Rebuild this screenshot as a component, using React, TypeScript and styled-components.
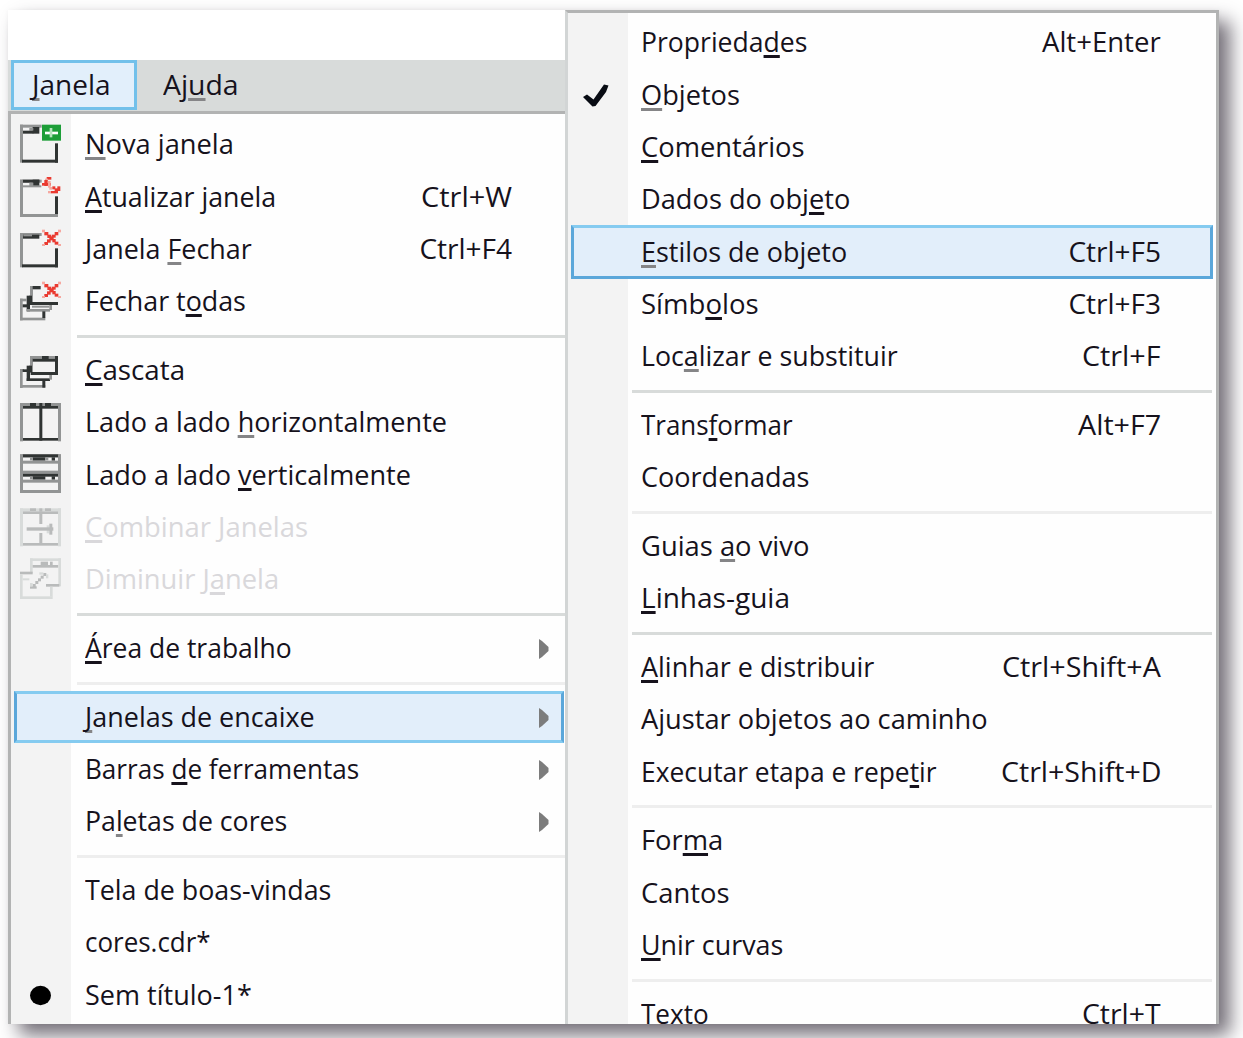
import React, { ReactNode, useLayoutEffect, useRef, useState } from 'react';
import styled, { createGlobalStyle } from 'styled-components';

const GlobalStyle = createGlobalStyle`
  body { margin: 0; background: #fff; overflow: hidden; }
  * { box-sizing: border-box; }
`;

const Page = styled.div`
  width: 1243px;
  height: 1038px;
  padding: 10px 0 0 8px;
  overflow: hidden;
  font-family: 'Open Sans', 'Noto Sans', sans-serif;
  font-size: 28px;
  font-weight: 500;
  color: #16121c;
`;

const Sheet = styled.div`
  display: flex;
  width: 1211px;
  height: 1014px;
  background: #fff;
  box-shadow: 11px 11px 18px rgba(62, 56, 68, 0.72), 0 0 5px rgba(0, 0, 0, 0.04);
`;

const LeftColumn = styled.div`
  display: flex;
  flex-direction: column;
  width: 557px;
  padding-top: 50px;
`;

const MenuBar = styled.div`
  display: flex;
  height: 54px;
  padding-left: 3px;
  background: #d8dbda;
  border-bottom: 3px solid #b2b3b3;
`;

const Tab = styled.div<{ $active?: boolean }>`
  display: flex;
  align-items: center;
  width: 126px;
  height: 50px;
  padding: 0 0 3px ${p => (p.$active ? 18 : 26)}px;
  border: ${p => (p.$active ? '3px solid #72c0ea' : '0')};
  background: ${p => (p.$active ? '#e2effb' : 'transparent')};
`;

const Panel = styled.div<{ $side: 'left' | 'right' }>`
  flex: 1;
  min-height: 0;
  overflow: hidden;
  background: linear-gradient(to right, #f3f3f3 60px, #fefefe 60px);
  ${p =>
    p.$side === 'left'
      ? 'padding-top: 5px; border-left: 3px solid #b2b3b3;'
      : 'padding-top: 4px; border: 3px solid #b2b3b3; border-left-color: #d2d5d5; border-bottom: 0;'}
`;

const Row = styled.div<{ $disabled?: boolean }>`
  position: relative;
  display: grid;
  grid-template-columns: 60px 1fr auto;
  align-items: center;
  height: 52.35px;
  color: ${p => (p.$disabled ? '#d9d8db' : 'inherit')};
`;

const Highlight = styled.div<{ $side: 'left' | 'right' }>`
  position: absolute;
  inset: ${p => (p.$side === 'left' ? '0 1px 1px 3px' : '-1px 3px 0 3px')};
  background: #e2eefa;
  border: 3px solid #5ba7da;
  border-top-color: #85cbf0;
  border-bottom-color: ${p => (p.$side === 'left' ? '#85cbf0' : '#5ba7da')};
`;

const Gutter = styled.div`
  position: relative;
  display: flex;
  justify-content: center;
  align-items: center;
  svg { overflow: visible; }
`;

const Label = styled.div<{ $side: 'left' | 'right' }>`
  position: relative;
  padding: 0 0 4px ${p => (p.$side === 'left' ? 14 : 13)}px;
  white-space: nowrap;
`;

const Shortcut = styled.div<{ $side: 'left' | 'right' }>`
  position: relative;
  display: flex;
  justify-content: flex-end;
  padding: 0 ${p => (p.$side === 'left' ? 53 : 55)}px 4px 0;
  white-space: nowrap;
`;

const Submenu = styled.div`
  position: relative;
  display: flex;
  padding-right: 16px;
`;

const Separator = styled.div<{ $dark?: boolean; $side: 'left' | 'right' }>`
  display: flex;
  align-items: center;
  height: 16.3px;
  padding: 0 ${p => (p.$side === 'left' ? 0 : 4)}px 0 ${p => (p.$side === 'left' ? 66 : 64)}px;
  &::after {
    content: '';
    flex: 1;
    height: 3px;
    background: ${p => (p.$dark ? '#d8dbda' : '#eeeeee')};
  }
`;

const Condensed = styled.span<{ $end?: boolean }>`
  display: inline-block;
  white-space: pre;
  transform-origin: ${p => (p.$end ? 'right' : 'left')} center;
`;

const Key = styled.span<{ $soft?: boolean }>`
  text-decoration: underline ${p => (p.$soft ? '#858587' : 'currentColor')} 3px;
  text-underline-offset: 3px;
  text-decoration-skip-ink: none;
`;

/* Sets a line of text to a given advance width. "_x" marks an access key, "~x" one with a grey line. */
function Fit({ text, width, end }: { text: string; width: number; end?: boolean }) {
  const ref = useRef<HTMLSpanElement>(null);
  const [scale, setScale] = useState(1);
  useLayoutEffect(() => {
    if (ref.current) setScale((width - 1) / ref.current.offsetWidth);
  }, [width, text]);
  const parts: ReactNode[] = [];
  let plain = '';
  for (let i = 0; i < text.length; i++) {
    if (text[i] === '_' || text[i] === '~') {
      parts.push(plain);
      plain = '';
      parts.push(<Key key={i} $soft={text[i] === '~'}>{text[i + 1]}</Key>);
      i++;
    } else plain += text[i];
  }
  parts.push(plain);
  return <Condensed ref={ref} $end={end} style={{ transform: `scaleX(${scale})` }}>{parts}</Condensed>;
}

const D = '#303433';
const G = '#929494';
const R = '#ea3a30';
const P = '#f5a8a0';
const L = '#d8dbda';
const M = '#b9bbbb';

type Block = [string, number, number, number, number];

const redX: Block[] = [
  [R, 73, 9, 12, 10], [R, 82, 17, 12, 10], [R, 88, 22, 13, 12], [R, 97, 30, 10, 10], [R, 104, 38, 11, 9],
  [R, 104, 9, 11, 10], [R, 96, 17, 11, 9], [R, 81, 31, 11, 10], [R, 73, 39, 11, 9],
  [P, 66, 2, 9, 8], [P, 114, 2, 9, 8], [P, 66, 45, 9, 6], [P, 114, 45, 9, 6],
];

const frame = (t: number, b: number, low: string, header: Block[]): Block[] => [
  [G, 0, t, 65, 9], ...header, [G, 0, t, 9, b - t],
  [D, 105, 58, 9, b - 58], [low, 6, b - 9, 108, 9],
];

const ICONS: Record<string, Block[]> = {
  create: [
    ...frame(2, 116, D, [[D, 38, 9, 20, 20], [G, 28, 12, 12, 8], [D, 8, 20, 32, 9]]),
    ['#1d9e38', 66, 2, 57, 48], ['#fff', 75, 23, 39, 8], ['#b5e3bd', 89, 12, 8, 28],
  ],
  refresh: [
    ...frame(8, 120, G, [[D, 8, 8, 50, 9], [D, 38, 8, 20, 20], [G, 28, 17, 12, 10], [G, 8, 25, 56, 6]]),
    [R, 80, 0, 14, 8], [P, 75, 5, 9, 8], [R, 73, 9, 10, 18], [R, 66, 18, 27, 8], [P, 84, 12, 8, 20],
    [P, 88, 30, 8, 8], [R, 97, 28, 9, 9], [R, 104, 34, 10, 12], [R, 112, 28, 9, 14], [R, 92, 42, 22, 7], [P, 84, 42, 8, 7],
  ],
  close: [...frame(12, 115, D, [[D, 8, 17, 50, 12], [G, 10, 16, 26, 6]]), ...redX],
  closeAll: [
    [G, 30, 15, 14, 9], [D, 38, 15, 24, 10], [G, 30, 24, 9, 42], [D, 35, 63, 79, 9],
    [D, 20, 44, 10, 47], [D, 28, 44, 8, 28], [G, 20, 84, 70, 8], [G, 88, 72, 8, 15], [G, 36, 74, 52, 6],
    [G, 0, 53, 20, 8], [G, 0, 53, 8, 65], [D, 8, 70, 20, 9], [G, 0, 110, 76, 8], [D, 67, 91, 9, 20],
    ...redX,
  ],
  cascade: [
    [G, 30, 18, 84, 8], [D, 66, 18, 20, 9], [D, 105, 18, 9, 57], [G, 30, 18, 9, 50], [D, 38, 26, 76, 9], [D, 32, 66, 82, 9],
    [D, 20, 47, 10, 46], [D, 28, 47, 8, 20], [D, 20, 85, 70, 8], [G, 88, 75, 8, 14],
    [G, 0, 57, 12, 8], [G, 0, 57, 8, 57], [D, 8, 58, 28, 8], [G, 0, 105, 76, 8], [D, 67, 93, 9, 20],
  ],
  columns: [
    [G, 0, 3, 123, 9], [D, 30, 3, 18, 9], [D, 58, 3, 9, 9], [D, 75, 3, 18, 9], [D, 8, 12, 107, 8],
    [G, 0, 3, 9, 115], [G, 114, 3, 9, 115], [D, 9, 108, 105, 8], [D, 58, 12, 9, 104],
  ],
  rows: [
    [G, 0, -2, 123, 9], [D, 8, -2, 107, 9], [D, 38, 7, 38, 10], [G, 30, 7, 8, 9], [G, 76, 7, 9, 9], [D, 95, 7, 10, 10],
    [G, 0, 17, 123, 9], [G, 0, 47, 123, 9], [D, 8, 56, 107, 9], [D, 38, 64, 38, 10], [G, 30, 64, 8, 9], [D, 95, 64, 10, 10],
    [G, 0, 74, 123, 9], [G, 0, 105, 123, 9], [G, 0, -2, 9, 115], [G, 114, -2, 9, 115],
  ],
  combine: [
    [L, 0, 4, 123, 9], [M, 30, 4, 18, 8], [M, 58, 4, 9, 8], [M, 75, 4, 18, 8], [M, 8, 13, 107, 8],
    [L, 0, 4, 9, 114], [L, 114, 4, 9, 114], [M, 9, 108, 105, 8], [M, 58, 13, 9, 38], [M, 58, 78, 9, 30],
    [L, 80, 55, 8, 24], [M, 20, 61, 80, 10], [M, 88, 50, 9, 33],
  ],
  shrink: [
    [L, 30, -2, 93, 8], [L, 30, -2, 8, 44], [M, 62, 8, 22, 10], [M, 90, 8, 8, 10], [M, 38, 18, 77, 8],
    [L, 115, -2, 8, 84], [M, 78, 75, 40, 8],
    [M, 0, 38, 38, 8], [L, 8, 58, 20, 6], [L, 0, 46, 8, 74], [L, 0, 112, 98, 8], [L, 90, 83, 8, 30],
    [M, 38, 75, 9, 10], [M, 46, 66, 9, 9], [M, 54, 58, 9, 9], [M, 62, 50, 9, 9], [M, 70, 42, 9, 9],
    [M, 30, 82, 20, 7], [L, 58, 40, 12, 7], [L, 78, 46, 7, 12], [L, 30, 72, 8, 10],
  ],
};

function Icon({ name }: { name: string }) {
  if (name === 'check') {
    return (
      <svg width="42" height="42" viewBox="0 0 42 42">
        <path d="M6 22 L10 19.5 L16.5 24.5 L27 9.5 L31.5 10.5 L29 17 L18.5 31 L15.5 31.5 Z" fill="#080b13" />
      </svg>
    );
  }
  if (name === 'bullet') {
    return (
      <svg width="42" height="42" viewBox="0 0 42 42">
        <ellipse cx="20.5" cy="20.5" rx="10.5" ry="9.7" fill="#000" />
      </svg>
    );
  }
  return (
    <svg width="42" height="42" viewBox="0 0 126 126">
      {ICONS[name].map(([fill, x, y, w, h], i) => (
        <rect key={i} x={x} y={y} width={w} height={h} fill={fill} />
      ))}
    </svg>
  );
}

type Item =
  | { sep: 'dark' | 'light' }
  | { t: string; w: number; k?: string; kw?: number; icon?: string; off?: boolean; on?: boolean; more?: boolean };

const leftItems: Item[] = [
  { t: '~Nova janela', w: 150, icon: 'create' },
  { t: '_Atualizar janela', w: 192, k: 'Ctrl+W', kw: 92, icon: 'refresh' },
  { t: 'Janela ~Fechar', w: 168, k: 'Ctrl+F4', kw: 94, icon: 'close' },
  { t: 'Fechar t_odas', w: 162, icon: 'closeAll' },
  { sep: 'dark' },
  { t: '_Cascata', w: 101, icon: 'cascade' },
  { t: 'Lado a lado ~horizontalmente', w: 363, icon: 'columns' },
  { t: 'Lado a lado _verticalmente', w: 327, icon: 'rows' },
  { t: '_Combinar Janelas', w: 224, icon: 'combine', off: true },
  { t: 'Diminuir J_anela', w: 195, icon: 'shrink', off: true },
  { sep: 'dark' },
  { t: '_Área de trabalho', w: 208, more: true },
  { sep: 'light' },
  { t: '~Janelas de encaixe', w: 231, more: true, on: true },
  { t: 'Barras _de ferramentas', w: 275, more: true },
  { t: 'Pa~letas de cores', w: 203, more: true },
  { sep: 'light' },
  { t: 'Tela de boas-vindas', w: 247 },
  { t: 'cores.cdr*', w: 127 },
  { t: 'Sem título-1*', w: 168, icon: 'bullet' },
];

const rightItems: Item[] = [
  { t: 'Proprieda_des', w: 167, k: 'Alt+Enter', kw: 120 },
  { t: '~Objetos', w: 100, icon: 'check' },
  { t: '_Comentários', w: 165 },
  { t: 'Dados do obj_eto', w: 210 },
  { t: '~Estilos de objeto', w: 207, k: 'Ctrl+F5', kw: 94, on: true },
  { t: 'Símb_olos', w: 119, k: 'Ctrl+F3', kw: 94 },
  { t: 'Loc~alizar e substituir', w: 258, k: 'Ctrl+F', kw: 80 },
  { sep: 'dark' },
  { t: 'Trans_formar', w: 153, k: 'Alt+F7', kw: 84 },
  { t: 'Coordenadas', w: 169 },
  { sep: 'light' },
  { t: 'Guias ~ao vivo', w: 169 },
  { t: '_Linhas-guia', w: 150 },
  { sep: 'dark' },
  { t: '_Alinhar e distribuir', w: 234, k: 'Ctrl+Shift+A', kw: 160 },
  { t: 'Ajustar objetos ao caminho', w: 348 },
  { t: 'Executar etapa e repe_tir', w: 297, k: 'Ctrl+Shift+D', kw: 161 },
  { sep: 'light' },
  { t: 'For_ma', w: 83 },
  { t: 'Cantos', w: 90 },
  { t: '_Unir curvas', w: 143 },
  { sep: 'light' },
  { t: 'Texto', w: 69, k: 'Ctrl+T', kw: 80 },
];

function Menu({ side, items }: { side: 'left' | 'right'; items: Item[] }) {
  return (
    <Panel $side={side}>
      {items.map((item, i) =>
        'sep' in item ? (
          <Separator key={i} $side={side} $dark={item.sep === 'dark'} />
        ) : (
          <Row key={i} $disabled={item.off}>
            {item.on && <Highlight $side={side} />}
            <Gutter>{item.icon && <Icon name={item.icon} />}</Gutter>
            <Label $side={side}><Fit text={item.t} width={item.w} /></Label>
            {item.k && <Shortcut $side={side}><Fit text={item.k} width={item.kw || 90} end /></Shortcut>}
            {item.more && (
              <Submenu>
                <svg width="10" height="20" viewBox="0 0 10 20">
                  <path d="M0 0 L3 2 L9.5 8 V12 L3 18 L0 20 Z" fill="#7c7c7c" />
                </svg>
              </Submenu>
            )}
          </Row>
        )
      )}
    </Panel>
  );
}

export default function App() {
  return (
    <>
      <GlobalStyle />
      <Page>
        <Sheet>
          <LeftColumn>
            <MenuBar>
              <Tab $active><Fit text="~Janela" width={80} /></Tab>
              <Tab><Fit text="Aj~uda" width={77} /></Tab>
            </MenuBar>
            <Menu side="left" items={leftItems} />
          </LeftColumn>
          <Menu side="right" items={rightItems} />
        </Sheet>
      </Page>
    </>
  );
}
